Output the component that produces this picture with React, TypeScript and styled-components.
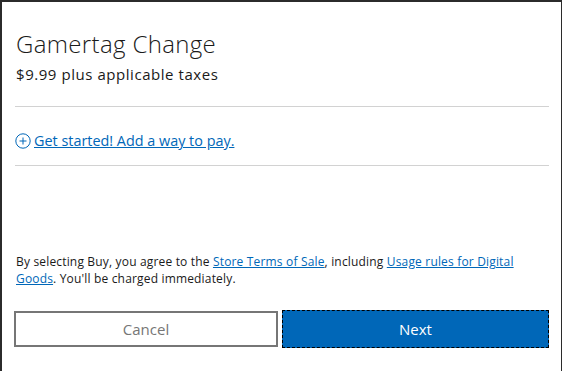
import React from "react";
import styled, { createGlobalStyle } from "styled-components";

const Global = createGlobalStyle`
  html, body { margin: 0; padding: 0; background: #fff; }
  body { font-family: "Open Sans", "Noto Sans", sans-serif; color: #000; }
  * { box-sizing: border-box; }
`;

const Frame = styled.div`
  width: 562px;
  height: 371px;
  border-top: 2px solid #2b2b2b;
  border-left: 2px solid #2b2b2b;
  border-right: 1px solid #2b2b2b;
  background: #fff;
  display: flex;
  flex-direction: column;
  padding: 0 12px;
`;

const Title = styled.h1`
  margin: 27px 0 0 2px;
  font-size: 24px;
  font-weight: 300;
  letter-spacing: 0.35px;
  line-height: 30px;
  color: #1a1a1a;
`;

const Price = styled.div`
  margin: 5px 0 0 2px;
  font-size: 15px;
  letter-spacing: 0.55px;
  line-height: 20px;
  color: #1a1a1a;
`;

const Divider = styled.hr<{ $top: number }>`
  margin: ${(p) => p.$top}px 0 0 1px;
  border: 0;
  border-top: 1px solid #d2d2d2;
  height: 0;
`;

const AddLink = styled.a`
  margin: 24px 0 0 1px;
  display: flex;
  align-items: center;
  gap: 3px;
  font-size: 14.4px;
  line-height: 20px;
  color: #0067b8;
  text-decoration: underline;
  cursor: pointer;
  align-self: flex-start;
`;

const Legal = styled.p`
  margin: auto 0 0 2px;
  font-size: 12px;
  letter-spacing: 0.17px;
  line-height: 17px;
  color: #1a1a1a;
`;

const InlineLink = styled.a`
  color: #0067b8;
  text-decoration: underline;
  cursor: pointer;
`;

const Buttons = styled.div`
  display: flex;
  gap: 4px;
  margin: 23px 0 23px 0;
  align-items: center;
`;

const CancelButton = styled.button`
  width: 264px;
  height: 36px;
  border: 2px solid #767676;
  background: #fff;
  color: #767676;
  font-family: inherit;
  font-size: 15px;
  padding: 0;
`;

const NextButton = styled.button`
  width: 267px;
  height: 38px;
  border: 1px dashed #000;
  background: #0067b8;
  color: #fff;
  font-family: inherit;
  font-size: 15px;
  font-weight: 500;
  padding: 0;
`;

const PlusIcon = () => (
  <svg width="16" height="16" viewBox="0 0 16 16" fill="none" stroke="currentColor" strokeWidth="1">
    <circle cx="8" cy="8" r="7.2" />
    <path d="M8 4.5v7M4.5 8h7" />
  </svg>
);

export default function App() {
  return (
    <>
      <Global />
      <Frame>
        <Title>Gamertag Change</Title>
        <Price>$9.99 plus applicable taxes</Price>
        <Divider $top={22} />
        <AddLink>
          <PlusIcon />
          <span>Get started! Add a way to pay.</span>
        </AddLink>
        <Divider $top={14} />
        <Legal>
          By selecting Buy, you agree to the <InlineLink>Store Terms of Sale</InlineLink>, including{" "}
          <InlineLink>Usage rules for Digital Goods</InlineLink>. You'll be charged immediately.
        </Legal>
        <Buttons>
          <CancelButton>Cancel</CancelButton>
          <NextButton>Next</NextButton>
        </Buttons>
      </Frame>
    </>
  );
}
